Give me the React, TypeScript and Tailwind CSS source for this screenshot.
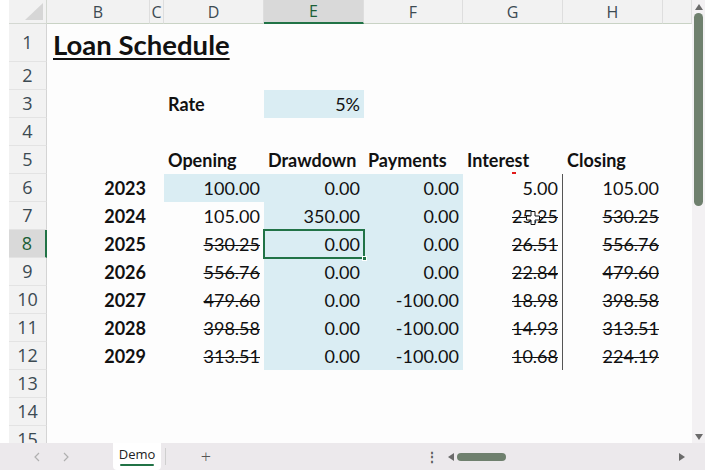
import type { ReactNode } from "react";

/* Excel-style loan schedule, sheet "Demo" */

const CELL_FONT = "font-['Lato','Open_Sans',sans-serif]";
const HEAD_FONT = "font-['Open_Sans','Noto_Sans',sans-serif]";

const letters = ["B", "C", "D", "E", "F", "G", "H", ""];

type CellSpec = {
  text?: ReactNode;
  align?: "l" | "r";
  bold?: boolean;
  strike?: boolean;
  fill?: boolean;
  extra?: string;
  over?: ReactNode;
};

const years = [2023, 2024, 2025, 2026, 2027, 2028, 2029];
const opening = ["100.00", "105.00", "530.25", "556.76", "479.60", "398.58", "313.51"];
const drawdown = ["0.00", "350.00", "0.00", "0.00", "0.00", "0.00", "0.00"];
const payments = ["0.00", "0.00", "0.00", "0.00", "-100.00", "-100.00", "-100.00"];
const interest = ["5.00", "25.25", "26.51", "22.84", "18.98", "14.93", "10.68"];
const closing = ["105.00", "530.25", "556.76", "479.60", "398.58", "313.51", "224.19"];

function FatCross() {
  return (
    <svg width="14" height="14" viewBox="0 0 14 14">
      <path
        d="M5 0.5h4v4.5h4.5v4h-4.5v4.5h-4v-4.5h-4.5v-4h4.5z"
        fill="#fff"
        stroke="#111"
        strokeWidth="1"
      />
    </svg>
  );
}

function specFor(r: number, c: number): CellSpec {
  // c: 0=B 1=C 2=D 3=E 4=F 5=G 6=H 7=I
  if (r === 3 && c === 2) return { text: "Rate", bold: true };
  if (r === 3 && c === 3) return { text: "5%", align: "r", fill: true };
  if (r === 5) {
    const heads = ["", "", "Opening", "Drawdown", "Payments", "Interest", "Closing", ""];
    if (c === 5)
      return {
        text: heads[c],
        bold: true,
        over: <span className="absolute left-[49px] bottom-[0px] h-[2px] w-[4px] bg-[#e21b1b]" />,
      };
    return { text: heads[c], bold: true };
  }
  if (r >= 6 && r <= 12) {
    const i = r - 6;
    if (c === 0) return { text: years[i], bold: true, align: "r" };
    if (c === 2) return { text: opening[i], align: "r", strike: i >= 2, fill: i === 0 };
    if (c === 3)
      return {
        text: drawdown[i],
        align: "r",
        fill: true,
        extra: r === 8 ? "outline outline-2 outline-[#217346] -outline-offset-1 z-10" : "",
        over:
          r === 8 ? (
            <span className="absolute -right-[3px] -bottom-[3px] h-[5px] w-[5px] bg-[#217346] border border-white" />
          ) : undefined,
      };
    if (c === 4) return { text: payments[i], align: "r", fill: true };
    if (c === 5)
      return {
        text: interest[i],
        align: "r",
        strike: i >= 1,
        extra: "border-r border-[#555]",
        over:
          r === 7 ? (
            <span className="absolute left-[63px] top-[9px]">
              <FatCross />
            </span>
          ) : undefined,
      };
    if (c === 6) return { text: closing[i], align: "r", strike: i >= 1 };
  }
  return {};
}

function Cell({ r, c }: { r: number; c: number }) {
  const s = specFor(r, c);
  return (
    <div
      className={`relative flex items-center px-[4px] text-[18px] leading-none text-[#111] ${CELL_FONT} ${
        s.align === "r" ? "justify-end" : "justify-start"
      } ${s.fill ? "bg-[#daedf3]" : "bg-[#fdfdfd]"} ${s.bold ? "font-bold" : ""} ${s.extra ?? ""}`}
    >
      {s.text !== undefined && (
        <span className={`whitespace-nowrap ${s.strike ? "line-through decoration-1" : ""}`}>
          {s.text}
        </span>
      )}
      {s.over}
    </div>
  );
}

function Grid() {
  const rows = Array.from({ length: 15 }, (_, i) => i + 1);
  return (
    <div className="h-[443px] overflow-hidden bg-white pl-[9px]">
      <div className="grid grid-cols-[38px_103px_14px_100px_100px_99px_100px_100px_29px] grid-rows-[24px_38px_repeat(14,28px)]">
        {/* corner */}
        <div className="relative border-b border-r border-[#d4d8d2] bg-[#f2f2f2]">
          <svg className="absolute right-[3px] bottom-[3px]" width="18" height="17" viewBox="0 0 18 17">
            <path d="M18 0L18 17L0 17Z" fill="#d6d6d6" />
          </svg>
        </div>
        {letters.map((l, i) => (
          <div
            key={l + i}
            className={`flex items-center justify-center text-[16px] ${HEAD_FONT} ${
              l === "E"
                ? "border-b-2 border-b-[#217346] bg-[#d9d9d9] text-[#1b5e37]"
                : "border-b border-b-[#c9d3c5] bg-[#f2f2f2] text-[#3c4a52]"
            } border-r border-r-[#dedede]`}
          >
            {l}
          </div>
        ))}

        {rows.map((r) => (
          <RowCells key={r} r={r} />
        ))}
      </div>
    </div>
  );
}

function RowCells({ r }: { r: number }) {
  const selected = r === 8;
  return (
    <>
      <div
        className={`flex items-center justify-center text-[18px] ${HEAD_FONT} border-b border-b-[#e3e3e3] ${
          selected
            ? "border-r-2 border-r-[#217346] bg-[#d9d9d9] text-[#1b5e37]"
            : "border-r border-r-[#d4d4d4] bg-[#f2f2f2] text-[#3c4a52]"
        }`}
      >
        {r}
      </div>
      {r === 1 ? (
        <div className="col-span-8 flex items-end bg-[#fdfdfd] px-[6px] pb-[4px]">
          <span
            className={`text-[27.5px] font-bold leading-none text-[#111] underline decoration-2 underline-offset-[3px] ${CELL_FONT}`}
          >
            Loan Schedule
          </span>
        </div>
      ) : (
        Array.from({ length: 8 }, (_, c) => <Cell key={c} r={r} c={c} />)
      )}
    </>
  );
}

function VScroll() {
  return (
    <div className="flex h-[443px] w-[13px] flex-col items-center bg-[#f3f1f3]">
      <svg className="mt-[4px]" width="8" height="6" viewBox="0 0 8 6">
        <path d="M4 0L8 6H0Z" fill="#6b6b6b" />
      </svg>
      <div className="mt-[3px] h-[193px] w-[9px] rounded-full bg-[#6f806e]" />
      <div className="flex-1" />
      <svg className="mb-[3px]" width="8" height="6" viewBox="0 0 8 6">
        <path d="M0 0H8L4 6Z" fill="#6b6b6b" />
      </svg>
    </div>
  );
}

function Chevron({ dir }: { dir: "l" | "r" }) {
  return (
    <svg width="6" height="10" viewBox="0 0 6 10">
      <path
        d={dir === "l" ? "M5 1L1 5L5 9" : "M1 1L5 5L1 9"}
        fill="none"
        stroke="#b0b0b0"
        strokeWidth="1.2"
      />
    </svg>
  );
}

function BottomBar() {
  return (
    <div className={`flex h-[27px] items-stretch bg-[#ece9ec] pl-[9px] ${HEAD_FONT}`}>
      <div className="flex w-[104px] items-center gap-[23px] pl-[25px]">
        <Chevron dir="l" />
        <Chevron dir="r" />
      </div>
      <div className="flex w-[48px] flex-col items-center justify-center rounded-b-[4px] bg-white">
        <span className="text-[13px] leading-none text-[#222]">Demo</span>
        <span className="mt-[3px] h-[2px] w-[34px] rounded bg-[#217346]" />
      </div>
      <div className="my-[5px] ml-[4px] w-px bg-[#cfcfcf]" />
      <div className="flex w-[80px] items-center justify-center text-[18px] font-light text-[#555]">+</div>
      <div className="flex-1" />
      <div className="flex w-[20px] items-center justify-center text-[12px] font-bold text-[#555]">⋮</div>
      <div className="flex w-[250px] items-center pl-[6px]">
        <svg width="6" height="8" viewBox="0 0 6 8">
          <path d="M0 4L6 0V8Z" fill="#6b6b6b" />
        </svg>
        <div className="ml-[3px] h-[8px] w-[49px] rounded-full bg-[#6f806e]" />
        <div className="flex-1" />
        <svg className="mr-[7px]" width="6" height="8" viewBox="0 0 6 8">
          <path d="M6 4L0 0V8Z" fill="#6b6b6b" />
        </svg>
      </div>
      <div className="w-[13px]" />
    </div>
  );
}

export default function App() {
  return (
    <div className="h-[470px] w-[705px] overflow-hidden bg-white">
      <div className="flex">
        <div className="w-[692px]">
          <Grid />
        </div>
        <VScroll />
      </div>
      <BottomBar />
    </div>
  );
}
